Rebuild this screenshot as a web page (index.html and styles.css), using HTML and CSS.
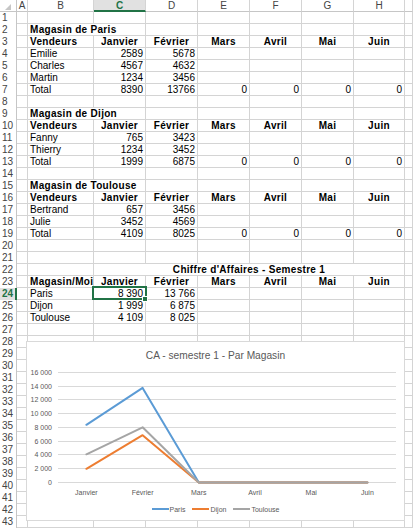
FILE: index.html
```html
<!DOCTYPE html>
<html lang="fr">
<head>
<meta charset="utf-8">
<title>Chiffre d'Affaires</title>
<link rel="stylesheet" href="styles.css">
</head>
<body>
<div class="sheet">
  <div class="row hdr">
    <div class="corner"><svg width="17" height="11" viewBox="0 0 17 11"><polygon points="11,4 11,10 5,10" fill="#c6c6c6"/></svg></div>
    <div>A</div><div>B</div><div class="sel">C</div><div>D</div><div>E</div><div>F</div><div>G</div><div>H</div><div></div>
  </div>
  <div class="row"><div class="rn">1</div><div></div><div></div><div></div><div></div><div></div><div></div><div></div><div></div><div></div></div>
  <div class="row"><div class="rn">2</div><div></div><div class="wide b">Magasin de Paris</div><div></div><div></div><div></div><div></div><div></div><div></div></div>
  <div class="row"><div class="rn">3</div><div></div><div class="b">Vendeurs</div><div class="b ctr">Janvier</div><div class="b ctr">Février</div><div class="b ctr">Mars</div><div class="b ctr">Avril</div><div class="b ctr">Mai</div><div class="b ctr">Juin</div><div></div></div>
  <div class="row"><div class="rn">4</div><div></div><div>Emilie</div><div class="num">2589</div><div class="num">5678</div><div></div><div></div><div></div><div></div><div></div></div>
  <div class="row"><div class="rn">5</div><div></div><div>Charles</div><div class="num">4567</div><div class="num">4632</div><div></div><div></div><div></div><div></div><div></div></div>
  <div class="row"><div class="rn">6</div><div></div><div>Martin</div><div class="num">1234</div><div class="num">3456</div><div></div><div></div><div></div><div></div><div></div></div>
  <div class="row"><div class="rn">7</div><div></div><div>Total</div><div class="num">8390</div><div class="num">13766</div><div class="num">0</div><div class="num">0</div><div class="num">0</div><div class="num">0</div><div></div></div>
  <div class="row"><div class="rn">8</div><div></div><div></div><div></div><div></div><div></div><div></div><div></div><div></div><div></div></div>
  <div class="row"><div class="rn">9</div><div></div><div class="wide b">Magasin de Dijon</div><div></div><div></div><div></div><div></div><div></div><div></div></div>
  <div class="row"><div class="rn">10</div><div></div><div class="b">Vendeurs</div><div class="b ctr">Janvier</div><div class="b ctr">Février</div><div class="b ctr">Mars</div><div class="b ctr">Avril</div><div class="b ctr">Mai</div><div class="b ctr">Juin</div><div></div></div>
  <div class="row"><div class="rn">11</div><div></div><div>Fanny</div><div class="num">765</div><div class="num">3423</div><div></div><div></div><div></div><div></div><div></div></div>
  <div class="row"><div class="rn">12</div><div></div><div>Thierry</div><div class="num">1234</div><div class="num">3452</div><div></div><div></div><div></div><div></div><div></div></div>
  <div class="row"><div class="rn">13</div><div></div><div>Total</div><div class="num">1999</div><div class="num">6875</div><div class="num">0</div><div class="num">0</div><div class="num">0</div><div class="num">0</div><div></div></div>
  <div class="row"><div class="rn">14</div><div></div><div></div><div></div><div></div><div></div><div></div><div></div><div></div><div></div></div>
  <div class="row"><div class="rn">15</div><div></div><div class="wide b">Magasin de Toulouse</div><div></div><div></div><div></div><div></div><div></div><div></div></div>
  <div class="row"><div class="rn">16</div><div></div><div class="b">Vendeurs</div><div class="b ctr">Janvier</div><div class="b ctr">Février</div><div class="b ctr">Mars</div><div class="b ctr">Avril</div><div class="b ctr">Mai</div><div class="b ctr">Juin</div><div></div></div>
  <div class="row"><div class="rn">17</div><div></div><div>Bertrand</div><div class="num">657</div><div class="num">3456</div><div></div><div></div><div></div><div></div><div></div></div>
  <div class="row"><div class="rn">18</div><div></div><div>Julie</div><div class="num">3452</div><div class="num">4569</div><div></div><div></div><div></div><div></div><div></div></div>
  <div class="row"><div class="rn">19</div><div></div><div>Total</div><div class="num">4109</div><div class="num">8025</div><div class="num">0</div><div class="num">0</div><div class="num">0</div><div class="num">0</div><div></div></div>
  <div class="row"><div class="rn">20</div><div></div><div></div><div></div><div></div><div></div><div></div><div></div><div></div><div></div></div>
  <div class="row"><div class="rn">21</div><div></div><div></div><div></div><div></div><div></div><div></div><div></div><div></div><div></div></div>
  <div class="row"><div class="rn">22</div><div></div><div></div><div class="merge b ctr">Chiffre d'Affaires - Semestre 1</div><div></div></div>
  <div class="row"><div class="rn">23</div><div></div><div class="b">Magasin/Mois</div><div class="b ctr">Janvier</div><div class="b ctr">Février</div><div class="b ctr">Mars</div><div class="b ctr">Avril</div><div class="b ctr">Mai</div><div class="b ctr">Juin</div><div></div></div>
  <div class="row"><div class="rn sel">24</div><div></div><div>Paris</div><div class="num">8&nbsp;390</div><div class="num">13&nbsp;766</div><div></div><div></div><div></div><div></div><div></div></div>
  <div class="row"><div class="rn">25</div><div></div><div>Dijon</div><div class="num">1&nbsp;999</div><div class="num">6&nbsp;875</div><div></div><div></div><div></div><div></div><div></div></div>
  <div class="row"><div class="rn">26</div><div></div><div>Toulouse</div><div class="num">4&nbsp;109</div><div class="num">8&nbsp;025</div><div></div><div></div><div></div><div></div><div></div></div>
  <div class="row"><div class="rn">27</div><div></div><div></div><div></div><div></div><div></div><div></div><div></div><div></div><div></div></div>
  <div class="row"><div class="rn">28</div><div></div><div></div><div></div><div></div><div></div><div></div><div></div><div></div><div></div></div>
  <div class="row"><div class="rn">29</div><div></div><div></div><div></div><div></div><div></div><div></div><div></div><div></div><div></div></div>
  <div class="row"><div class="rn">30</div><div></div><div></div><div></div><div></div><div></div><div></div><div></div><div></div><div></div></div>
  <div class="row"><div class="rn">31</div><div></div><div></div><div></div><div></div><div></div><div></div><div></div><div></div><div></div></div>
  <div class="row"><div class="rn">32</div><div></div><div></div><div></div><div></div><div></div><div></div><div></div><div></div><div></div></div>
  <div class="row"><div class="rn">33</div><div></div><div></div><div></div><div></div><div></div><div></div><div></div><div></div><div></div></div>
  <div class="row"><div class="rn">34</div><div></div><div></div><div></div><div></div><div></div><div></div><div></div><div></div><div></div></div>
  <div class="row"><div class="rn">35</div><div></div><div></div><div></div><div></div><div></div><div></div><div></div><div></div><div></div></div>
  <div class="row"><div class="rn">36</div><div></div><div></div><div></div><div></div><div></div><div></div><div></div><div></div><div></div></div>
  <div class="row"><div class="rn">37</div><div></div><div></div><div></div><div></div><div></div><div></div><div></div><div></div><div></div></div>
  <div class="row"><div class="rn">38</div><div></div><div></div><div></div><div></div><div></div><div></div><div></div><div></div><div></div></div>
  <div class="row"><div class="rn">39</div><div></div><div></div><div></div><div></div><div></div><div></div><div></div><div></div><div></div></div>
  <div class="row"><div class="rn">40</div><div></div><div></div><div></div><div></div><div></div><div></div><div></div><div></div><div></div></div>
  <div class="row"><div class="rn">41</div><div></div><div></div><div></div><div></div><div></div><div></div><div></div><div></div><div></div></div>
  <div class="row"><div class="rn">42</div><div></div><div></div><div></div><div></div><div></div><div></div><div></div><div></div><div></div></div>
  <div class="row"><div class="rn">43</div><div></div><div></div><div></div><div></div><div></div><div></div><div></div><div></div><div></div></div>

  <div class="selbox"><div class="handle"></div></div>

  <div class="chart">
    <div class="chart-title">CA - semestre 1 - Par Magasin</div>
    <svg class="plot" viewBox="1 27 377 130" width="377" height="130">
      <g class="grid">
        <line x1="32" y1="31.5" x2="370" y2="31.5"/>
        <line x1="32" y1="45.5" x2="370" y2="45.5"/>
        <line x1="32" y1="58.5" x2="370" y2="58.5"/>
        <line x1="32" y1="72.5" x2="370" y2="72.5"/>
        <line x1="32" y1="86.5" x2="370" y2="86.5"/>
        <line x1="32" y1="100.5" x2="370" y2="100.5"/>
        <line x1="32" y1="113.5" x2="370" y2="113.5"/>
        <line x1="32" y1="127.5" x2="370" y2="127.5"/>
        <line x1="32" y1="141.5" x2="370" y2="141.5"/>
      </g>
      <g class="ylab">
        <text x="26" y="34">16 000</text>
        <text x="26" y="48">14 000</text>
        <text x="26" y="61">12 000</text>
        <text x="26" y="75">10 000</text>
        <text x="26" y="89">8 000</text>
        <text x="26" y="103">6 000</text>
        <text x="26" y="116">4 000</text>
        <text x="26" y="130">2 000</text>
        <text x="26" y="144">0</text>
      </g>
      <g class="xlab">
        <text x="60.4" y="154">Janvier</text>
        <text x="116.6" y="154">Février</text>
        <text x="172.8" y="154">Mars</text>
        <text x="229" y="154">Avril</text>
        <text x="285.2" y="154">Mai</text>
        <text x="341.4" y="154">Juin</text>
      </g>
      <polyline class="s-paris" points="60.4,83.8 116.6,46.9 172.8,141.5 229,141.5 285.2,141.5 341.4,141.5"/>
      <polyline class="s-dijon" points="60.4,127.8 116.6,94.2 172.8,141.5 229,141.5 285.2,141.5 341.4,141.5"/>
      <polyline class="s-toulouse" points="60.4,113.3 116.6,86.3 172.8,141.5 229,141.5 285.2,141.5 341.4,141.5"/>
    </svg>
    <div class="legend">
      <div class="key"><span class="swatch paris"></span><span>Paris</span></div>
      <div class="key"><span class="swatch dijon"></span><span>Dijon</span></div>
      <div class="key"><span class="swatch toulouse"></span><span>Toulouse</span></div>
    </div>
  </div>
</div>
</body>
</html>
```
FILE: styles.css
```css
html, body {
  margin: 0;
  padding: 0;
}
body {
  width: 413px;
  height: 528px;
  overflow: hidden;
  background: #fff;
  font-family: "Liberation Sans", Arial, sans-serif;
  font-size: 10px;
  color: #000;
}
.sheet {
  position: relative;
  width: 413px;
  height: 528px;
}
.row {
  display: grid;
  grid-template-columns: 17px 11px 66px 52px 52px 52px 52px 52px 51px 8px;
  height: 12px;
}
.row > div {
  box-sizing: border-box;
  height: 12px;
  border-right: 1px solid #d4d4d4;
  border-bottom: 1px solid #d4d4d4;
  line-height: 11px;
  padding: 0 2px;
  white-space: nowrap;
  overflow: hidden;
}
.row > .rn {
  border-bottom: none;
  border-right-color: #c6c6c6;
  color: #444;
  padding: 0 0 0 2px;
}
.rn.sel {
  background: #e1e1e1;
  color: #217346;
  font-weight: bold;
  border-right: 2px solid #217346;
}
.hdr > div {
  color: #444;
  text-align: center;
  padding: 0;
  border-bottom-color: #c6c6c6;
}
.hdr > .corner {
  border-right-color: #c6c6c6;
}
.corner svg {
  display: block;
}
.hdr > .sel {
  background: #e1e1e1;
  color: #217346;
  font-weight: bold;
  border-bottom: 2px solid #217346;
}
.b {
  font-weight: bold;
  letter-spacing: 0.3px;
}
.num {
  text-align: right;
}
.ctr {
  text-align: center;
}
.wide {
  grid-column: span 2;
}
.merge {
  grid-column: span 6;
}

/* active cell */
.selbox {
  position: absolute;
  left: 92px;
  top: 286px;
  width: 55px;
  height: 14px;
  box-sizing: border-box;
  border: 2px solid #217346;
}
.handle {
  position: absolute;
  right: -3px;
  bottom: -4px;
  width: 4px;
  height: 4px;
  background: #217346;
  border: 1px solid #fff;
}

/* chart */
.chart {
  position: absolute;
  left: 26px;
  top: 341px;
  width: 379px;
  height: 180px;
  box-sizing: border-box;
  background: #fff;
  border: 1px solid #d9d9d9;
  color: #595959;
  font-family: "Liberation Sans", Arial, sans-serif;
}
.chart-title {
  height: 26px;
  box-sizing: border-box;
  padding-top: 2px;
  line-height: 24px;
  font-size: 10.2px;
  text-align: center;
}
.plot {
  display: block;
}
.grid line {
  stroke: #d9d9d9;
  stroke-width: 1;
  shape-rendering: crispEdges;
}
.ylab text {
  font-size: 7px;
  fill: #595959;
  text-anchor: end;
}
.xlab text {
  font-size: 7px;
  fill: #595959;
  text-anchor: middle;
}
.plot polyline {
  fill: none;
  stroke-width: 2;
  stroke-linejoin: round;
  stroke-linecap: round;
}
.s-paris { stroke: #5b9bd5; }
.s-dijon { stroke: #ed7d31; }
.s-toulouse { stroke: #a5a5a5; }
.legend {
  display: flex;
  justify-content: center;
  align-items: center;
  gap: 7px;
  height: 22px;
  font-size: 7px;
}
.key {
  display: flex;
  align-items: center;
  gap: 1px;
}
.swatch {
  display: block;
  width: 17px;
  height: 2px;
}
.swatch.paris { background: #5b9bd5; }
.swatch.dijon { background: #ed7d31; }
.swatch.toulouse { background: #a5a5a5; }
```
